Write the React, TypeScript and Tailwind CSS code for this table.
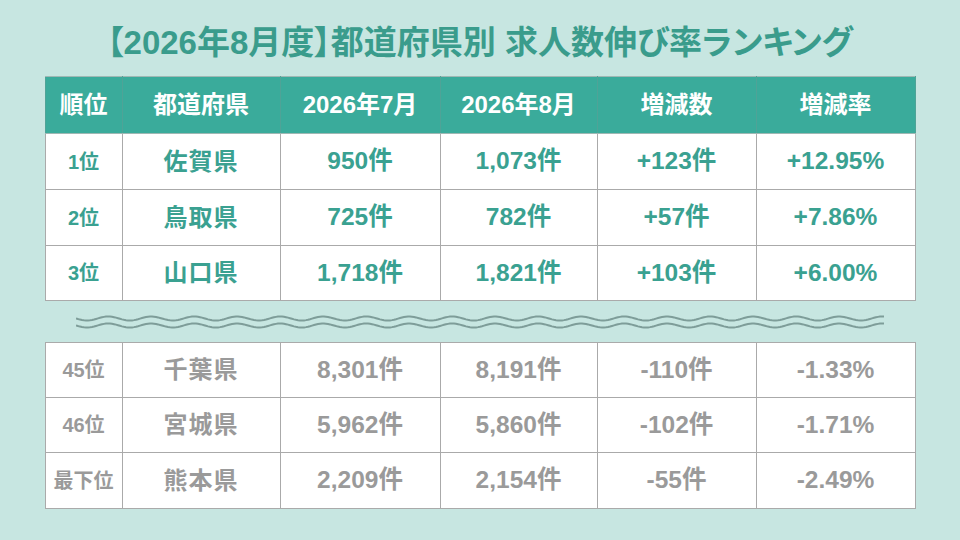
import * as React from "react";

type Row = {
  rank: string;
  pref: string;
  jul: string;
  aug: string;
  diff: string;
  rate: string;
};

const TOP: Row[] = [
  { rank: "1位", pref: "佐賀県", jul: "950件", aug: "1,073件", diff: "+123件", rate: "+12.95%" },
  { rank: "2位", pref: "鳥取県", jul: "725件", aug: "782件", diff: "+57件", rate: "+7.86%" },
  { rank: "3位", pref: "山口県", jul: "1,718件", aug: "1,821件", diff: "+103件", rate: "+6.00%" },
];

const BOTTOM: Row[] = [
  { rank: "45位", pref: "千葉県", jul: "8,301件", aug: "8,191件", diff: "-110件", rate: "-1.33%" },
  { rank: "46位", pref: "宮城県", jul: "5,962件", aug: "5,860件", diff: "-102件", rate: "-1.71%" },
  { rank: "最下位", pref: "熊本県", jul: "2,209件", aug: "2,154件", diff: "-55件", rate: "-2.49%" },
];

const HEADERS = ["順位", "都道府県", "2026年7月", "2026年8月", "増減数", "増減率"];

// sine path for the "omitted rows" wave
function wavePath(y: number, width: number, period: number, amp: number) {
  const pts: string[] = [];
  for (let x = 0; x <= width; x += 2) {
    const v = y + Math.sin((x / period) * Math.PI * 2) * amp;
    pts.push(`${x === 0 ? "M" : "L"}${x} ${v.toFixed(2)}`);
  }
  return pts.join(" ");
}

function Cols() {
  return (
    <colgroup>
      <col className="w-[77px]" />
      <col className="w-[158px]" />
      <col className="w-[160px]" />
      <col className="w-[157px]" />
      <col className="w-[159px]" />
      <col className="w-[159px]" />
    </colgroup>
  );
}

function BodyRow({ row, tone, h }: { row: Row; tone: "teal" | "gray"; h: string }) {
  const color = tone === "teal" ? "text-[#3aa191]" : "text-[#9a9a9a]";
  const cell = "border border-[#aaaaaa] p-0 text-center align-middle";
  return (
    <tr className={`${h} bg-white ${color}`}>
      <td className={`${cell} text-[20px]`}>{row.rank}</td>
      <td className={`${cell} text-[24px] tracking-[1px]`}>{row.pref}</td>
      <td className={`${cell} text-[24.5px]`}>{row.jul}</td>
      <td className={`${cell} text-[24.5px]`}>{row.aug}</td>
      <td className={`${cell} text-[24.5px]`}>{row.diff}</td>
      <td className={`${cell} text-[24.5px]`}>{row.rate}</td>
    </tr>
  );
}

export default function App() {
  return (
    <div className="flex h-[540px] w-[960px] flex-col items-center bg-[#c7e6e1] font-['Liberation_Sans','Noto_Sans_CJK_JP',sans-serif] font-bold">
      <div className="flex h-[76px] items-center justify-center pt-[9px]">
        <h1 className="text-[33px] leading-[36px] text-[#3a9c8c] [font-feature-settings:'palt']">
          【2026年8月度】都道府県別 求人数伸び率ランキング
        </h1>
      </div>

      <table className="w-[870px] table-fixed border-collapse">
        <Cols />
        <thead>
          <tr className="h-[57px] bg-[#3aab9b] text-white">
            {HEADERS.map((h) => (
              <th
                key={h}
                className="border border-[#9fb8b4] border-x-[#4fa397] p-0 text-center align-middle text-[24px] font-bold"
              >
                {h}
              </th>
            ))}
          </tr>
        </thead>
        <tbody>
          <BodyRow row={TOP[0]} tone="teal" h="h-[56px]" />
          <BodyRow row={TOP[1]} tone="teal" h="h-[56px]" />
          <BodyRow row={TOP[2]} tone="teal" h="h-[55px]" />
        </tbody>
      </table>

      <div className="flex h-[41px] w-[870px] items-center">
        <svg width="808" height="20" viewBox="0 0 808 20" className="ml-[31px]">
          <path d={wavePath(6.5, 808, 43, 2)} fill="none" stroke="#7e9d99" strokeWidth="2" />
          <path d={wavePath(13.5, 808, 43, 2)} fill="none" stroke="#7e9d99" strokeWidth="2" />
        </svg>
      </div>

      <table className="w-[870px] table-fixed border-collapse">
        <Cols />
        <tbody>
          <BodyRow row={BOTTOM[0]} tone="gray" h="h-[55px]" />
          <BodyRow row={BOTTOM[1]} tone="gray" h="h-[55px]" />
          <BodyRow row={BOTTOM[2]} tone="gray" h="h-[56px]" />
        </tbody>
      </table>
    </div>
  );
}
